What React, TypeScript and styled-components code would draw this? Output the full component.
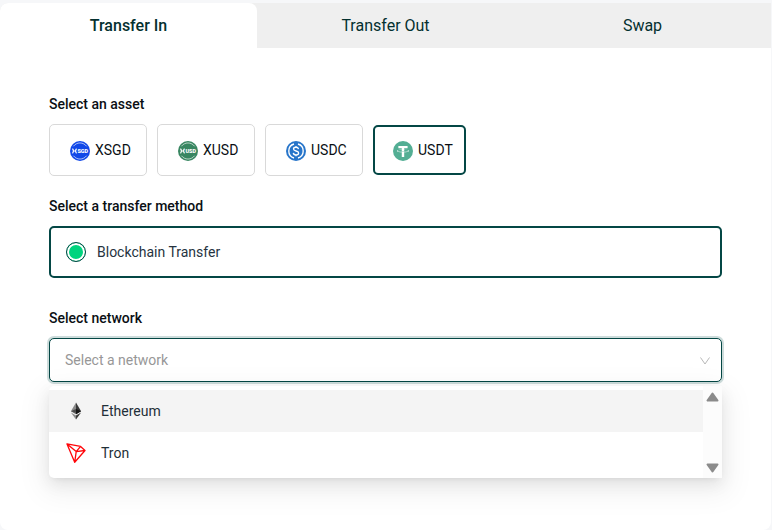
import React, { useState } from "react";
import styled, { createGlobalStyle, css } from "styled-components";

const teal = "#044745";
const ink = "#04302f";

const GlobalStyle = createGlobalStyle`
  *, *::before, *::after { box-sizing: border-box; }
  body {
    margin: 0;
    background: #f6f7f9;
    color: #0a0f14;
    font-family: Roboto, "Liberation Sans", sans-serif;
    font-size: 14px;
    line-height: 20px;
  }
  button, select, input { font: inherit; color: inherit; }
`;

const Page = styled.div`
  padding: 3px 1px 0 0;
`;

const Card = styled.main`
  min-height: calc(100vh - 3px);
  background: #fff;
  border-radius: 8px 0 8px 8px;
  overflow: hidden;
`;

const TabBar = styled.div`
  display: grid;
  grid-template-columns: repeat(3, 1fr);
  background: #efefef;
`;

const Tab = styled.button<{ $active: boolean }>`
  height: 45px;
  padding: 0;
  border: 0;
  cursor: pointer;
  font-size: 16px;
  line-height: 24px;
  color: ${ink};
  background: ${(p) => (p.$active ? "#fff" : "transparent")};
  font-weight: ${(p) => (p.$active ? 500 : 400)};
  border-radius: ${(p) => (p.$active ? "8px 8px 0 0" : "0")};
`;

const Form = styled.form`
  display: flex;
  flex-direction: column;
  padding: 46px 49px 52px;
`;

const Group = styled.section`
  display: flex;
  flex-direction: column;
  gap: 10px;
  & + & { margin-top: 20px; }
  & + &:last-child { margin-top: 30px; }
`;

const labelText = css`
  margin: 0;
  font-size: 14px;
  line-height: 20px;
  font-weight: 500;
  color: #0a0f14;
`;

const Title = styled.h2`${labelText}`;
const FieldLabel = styled.label`${labelText}`;

const AssetRow = styled.div`
  display: flex;
  flex-wrap: wrap;
  align-items: center;
  gap: 10px;
`;

const AssetButton = styled.button<{ $active: boolean }>`
  display: flex;
  align-items: center;
  gap: 5px;
  width: ${(p) => (p.$active ? 93 : 98)}px;
  height: ${(p) => (p.$active ? 50 : 52)}px;
  padding: 0 0 0 ${(p) => (p.$active ? 18 : 20)}px;
  border: ${(p) => (p.$active ? `2px solid ${teal}` : "1px solid #d9d9d9")};
  border-radius: 5px;
  background: #fff;
  cursor: pointer;
  svg { flex: none; margin-top: 2px; }
`;

const MethodOption = styled.label`
  display: flex;
  align-items: center;
  gap: 11px;
  height: 52px;
  padding: 0 15px;
  border: 2px solid ${teal};
  border-radius: 5px;
  color: #26333f;
  cursor: pointer;
`;

const Radio = styled.input`
  appearance: none;
  width: 20px;
  height: 20px;
  margin: 0;
  border: 1px solid ${teal};
  border-radius: 50%;
  background: #00d47e;
  box-shadow: inset 0 0 0 2px #fff;
`;

const SelectWrap = styled.div`
  position: relative;
  display: flex;
`;

const NetworkSelect = styled.select<{ $empty: boolean }>`
  appearance: none;
  flex: 1;
  height: 44px;
  padding: 0 40px 0 15px;
  border: 1px solid ${teal};
  border-radius: 5px;
  outline: 0;
  background: #fff;
  box-shadow: 0 0 0 2px #cddcdb;
  color: ${(p) => (p.$empty ? "#979797" : "#26333f")};
`;

const Chevron = styled.svg`
  position: absolute;
  top: 17px;
  right: 11px;
  pointer-events: none;
`;

const Menu = styled.div`
  position: absolute;
  top: 48px;
  left: 0;
  right: 0;
  display: flex;
  border-radius: 5px 5px 0 5px;
  background: #fff;
  box-shadow: 0 6px 16px 0 rgba(0, 0, 0, 0.08), 0 3px 6px -4px rgba(0, 0, 0, 0.12),
    0 9px 28px 8px rgba(0, 0, 0, 0.05);
`;

const OptionList = styled.ul`
  flex: 1;
  margin: 0;
  padding: 4px 0;
  list-style: none;
`;

const Option = styled.li<{ $hover: boolean }>`
  display: flex;
  align-items: center;
  gap: 15px;
  height: 42px;
  padding: 0 17px;
  color: #1f2f38;
  background: ${(p) => (p.$hover ? "#f4f4f4" : "transparent")};
  cursor: pointer;
`;

const ScrollTrack = styled.div`
  display: flex;
  flex-direction: column;
  align-items: center;
  justify-content: space-between;
  width: 19px;
  padding: 6px 0 5px;
  background: #fcfcfc;
`;

const RingedToken = ({ color, text }: { color: string; text: string }) => (
  <svg width="20" height="20" viewBox="0 0 20 20" aria-hidden="true">
    <circle cx="10" cy="10" r="10" fill={color} />
    <path d="M3.4 5.3A8.200 8.200 0 0 1 16.600 5.300M3.400 14.700A8.200 8.200 0 0 0 16.600 14.700" fill="none" stroke="#fff" strokeOpacity="0.8" strokeWidth="0.8" />
    <path d="M2.500 7.700q1.900 2.300 0 4.600M6.500 7.700q-1.900 2.300 0 4.600M3.200 10h2.600" fill="none" stroke="#fff" strokeWidth="1.100" />
    <text x="12.800" y="12" fontSize="5.500" fontWeight="900" fill="#fff" textAnchor="middle">{text}</text>
  </svg>
);

const UsdcIcon = () => (
  <svg width="20" height="20" viewBox="0 0 32 32" aria-hidden="true">
    <circle cx="16" cy="16" r="16" fill="#2775ca" />
    <path d="M12.800 4.800a11.700 11.700 0 0 0 0 22.400M19.200 4.800a11.700 11.700 0 0 1 0 22.400" fill="none" stroke="#fff" strokeWidth="2.200" />
    <path d="M20 12.900c-.3-1.900-1.700-2.900-4-2.900-2.400 0-4 1.100-4 2.900 0 4.300 8.200 1.900 8.200 6.200 0 2-1.800 3.100-4.200 3.100-2.600 0-4.100-1.200-4.300-3.200M16 7.800v2.300M16 22v2.300" fill="none" stroke="#fff" strokeWidth="2.100" />
  </svg>
);

const UsdtIcon = () => (
  <svg width="20" height="20" viewBox="0 0 32 32" aria-hidden="true">
    <circle cx="16" cy="16" r="16" fill="#53ae94" />
    <path fill="#fff" d="M17.922 17.383v-.002c-.11.008-.677.042-1.942.042-1.010 0-1.721-.030-1.971-.042v.003c-3.888-.171-6.790-.848-6.790-1.658 0-.809 2.902-1.486 6.790-1.660v2.644c.254.018.982.061 1.988.061 1.207 0 1.812-.050 1.925-.060v-2.643c3.880.173 6.775.850 6.775 1.658 0 .810-2.895 1.485-6.775 1.657m0-3.590v-2.366h5.414V7.819H8.595v3.608h5.414v2.365c-4.400.202-7.709 1.074-7.709 2.118 0 1.044 3.309 1.915 7.709 2.118v7.582h3.913v-7.584c4.393-.202 7.694-1.073 7.694-2.116 0-1.043-3.301-1.914-7.694-2.117" />
  </svg>
);

const EthereumIcon = () => (
  <svg width="20" height="20" viewBox="0 0 20 20" aria-hidden="true">
    <path fill="#8a8a8a" d="M10 1.500v9.900L4.900 10.300z" />
    <path fill="#343434" d="M10 1.500v11.800L4.900 10.300l5.100-2.300z" fillOpacity=".75" />
    <path fill="#393939" d="M10 1.500l5.100 8.800-5.100 3z" />
    <path fill="#141414" d="M10 8l5.100 2.300-5.100 3z" />
    <path fill="#8c8c8c" d="M4.900 11.400l5.100 3v4.100z" />
    <path fill="#3c3c3b" d="M15.100 11.400l-5.100 3v4.100z" />
  </svg>
);

const TronIcon = () => (
  <svg width="20" height="20" viewBox="0 0 20 20" aria-hidden="true" fill="none" stroke="#ff060a" strokeWidth="1.300" strokeLinejoin="round">
    <path d="M1 .9L14.600 3.400L19 7.500L8.700 19.300zM1 .9L10.200 8.600L19 7.500M14.600 3.400L10.200 8.600L8.700 19.300" />
  </svg>
);

const ScrollArrow = ({ down }: { down?: boolean }) => (
  <svg width="13" height="10" viewBox="0 0 13 10" aria-hidden="true">
    <path
      d={down ? "M1.500 1.500h10L6.500 8.500z" : "M1.500 8.500h10L6.500 1.500z"}
      fill="#8b8b8b" stroke="#8b8b8b" strokeWidth="2" strokeLinejoin="round"
    />
  </svg>
);

const tabs = ["Transfer In", "Transfer Out", "Swap"];

const assets = [
  { name: "XSGD", icon: <RingedToken color="#1148e8" text="SGD" /> },
  { name: "XUSD", icon: <RingedToken color="#388661" text="USD" /> },
  { name: "USDC", icon: <UsdcIcon /> },
  { name: "USDT", icon: <UsdtIcon /> },
];

const networks = [
  { name: "Ethereum", icon: <EthereumIcon /> },
  { name: "Tron", icon: <TronIcon /> },
];

export default function App() {
  const [tab, setTab] = useState(tabs[0]);
  const [asset, setAsset] = useState("USDT");
  const [network, setNetwork] = useState("");
  const [hovered, setHovered] = useState("Ethereum");

  return (
    <>
      <GlobalStyle />
      <Page>
        <Card>
          <TabBar role="tablist">
            {tabs.map((name) => (
              <Tab key={name} type="button" role="tab" aria-selected={tab === name} $active={tab === name} onClick={() => setTab(name)}>
                {name}
              </Tab>
            ))}
          </TabBar>
          <Form>
            <Group>
              <Title>Select an asset</Title>
              <AssetRow>
                {assets.map(({ name, icon }) => (
                  <AssetButton key={name} type="button" aria-pressed={asset === name} $active={asset === name} onClick={() => setAsset(name)}>
                    {icon}
                    {name}
                  </AssetButton>
                ))}
              </AssetRow>
            </Group>
            <Group>
              <Title>Select a transfer method</Title>
              <MethodOption>
                <Radio type="radio" name="method" defaultChecked />
                Blockchain Transfer
              </MethodOption>
            </Group>
            <Group>
              <FieldLabel htmlFor="network">Select network</FieldLabel>
              <SelectWrap>
                <NetworkSelect id="network" value={network} $empty={!network} onChange={(e) => setNetwork(e.target.value)}>
                  <option value="" disabled>Select a network</option>
                  {networks.map(({ name }) => (
                    <option key={name} value={name}>{name}</option>
                  ))}
                </NetworkSelect>
                <Chevron width="12" height="12" viewBox="0 0 12 12" fill="none" stroke="#b8b8b8" aria-hidden="true">
                  <path d="M1.500 2.500L6 9l4.500-6.500" />
                </Chevron>
                <Menu>
                  <OptionList role="listbox" aria-label="Networks">
                    {networks.map(({ name, icon }) => (
                      <Option
                        key={name}
                        role="option"
                        aria-selected={network === name}
                        $hover={hovered === name}
                        onMouseEnter={() => setHovered(name)}
                        onClick={() => setNetwork(name)}
                      >
                        {icon}
                        {name}
                      </Option>
                    ))}
                  </OptionList>
                  <ScrollTrack>
                    <ScrollArrow />
                    <ScrollArrow down />
                  </ScrollTrack>
                </Menu>
              </SelectWrap>
            </Group>
          </Form>
        </Card>
      </Page>
    </>
  );
}
